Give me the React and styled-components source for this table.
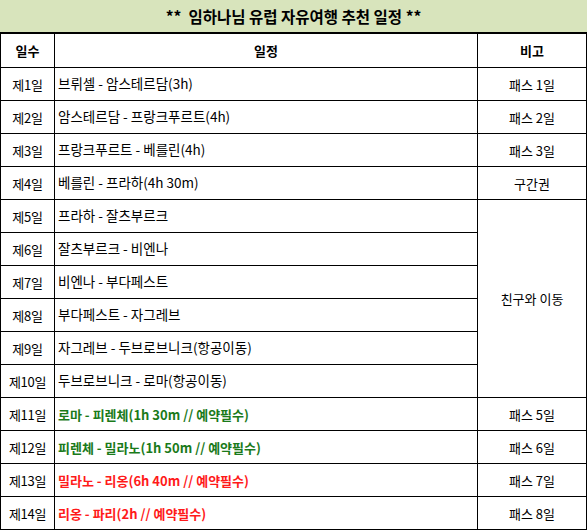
import React from "react";
import styled, { createGlobalStyle } from "styled-components";

const GlobalStyle = createGlobalStyle`
  html, body {
    margin: 0;
    padding: 0;
    background: #ffffff;
  }
  body {
    font-family: "Noto Sans CJK KR", "Noto Sans", sans-serif;
    color: #000;
  }
`;

const Wrapper = styled.div`
  width: 587px;
`;

const Title = styled.div`
  height: 32px;
  background-color: #d8e4bc;
  display: flex;
  justify-content: center;
  align-items: center;
  font-size: 15.5px;
  font-weight: bold;
`;

const Table = styled.table`
  width: 586px;
  border-collapse: collapse;
  table-layout: fixed;
  font-size: 13px;
  border-top: 2px solid #000;
  th,
  td {
    border: 1px solid #000;
    padding: 0;
    line-height: 1;
  }
  th {
    height: 33px;
    font-weight: bold;
    text-align: center;
  }
  td {
    height: 32px;
  }
`;

const Col = styled.col`
  width: ${(props) => props.size}px;
`;

const DayCell = styled.td`
  text-align: center;
  letter-spacing: -0.3px;
`;

const toneColors = {
  green: "#1a7a1a",
  red: "#ff1a1a",
};

const RouteCell = styled.td`
  && {
    padding-left: 3px;
  }
  font-size: ${(props) => (props.tone ? "13px" : "13.5px")};
  color: ${(props) => toneColors[props.tone] || "#000"};
  font-weight: ${(props) => (props.tone ? "bold" : "normal")};
`;

const NoteCell = styled.td`
  text-align: center;
`;

const schedule = [
  { route: "브뤼셀 - 암스테르담(3h)", note: "패스 1일" },
  { route: "암스테르담 - 프랑크푸르트(4h)", note: "패스 2일" },
  { route: "프랑크푸르트 - 베를린(4h)", note: "패스 3일" },
  { route: "베를린 - 프라하(4h 30m)", note: "구간권" },
  { route: "프라하 - 잘츠부르크", note: "친구와 이동", span: 6 },
  { route: "잘츠부르크 - 비엔나" },
  { route: "비엔나 - 부다페스트" },
  { route: "부다페스트 - 자그레브" },
  { route: "자그레브 - 두브로브니크(항공이동)" },
  { route: "두브로브니크 - 로마(항공이동)" },
  { route: "로마 - 피렌체(1h 30m // 예약필수)", note: "패스 5일", tone: "green" },
  { route: "피렌체 - 밀라노(1h 50m // 예약필수)", note: "패스 6일", tone: "green" },
  { route: "밀라노 - 리옹(6h 40m // 예약필수)", note: "패스 7일", tone: "red" },
  { route: "리옹 - 파리(2h // 예약필수)", note: "패스 8일", tone: "red" },
];

const App = () => {
  return (
    <Wrapper>
      <GlobalStyle />
      <Title>**&nbsp;&nbsp;임하나님 유럽 자유여행 추천 일정 **</Title>
      <Table>
        <colgroup>
          <Col size={54} />
          <Col size={423} />
          <Col size={109} />
        </colgroup>
        <thead>
          <tr>
            <th>일수</th>
            <th>일정</th>
            <th>비고</th>
          </tr>
        </thead>
        <tbody>
          {schedule.map((item, index) => (
            <tr key={index}>
              <DayCell>제{index + 1}일</DayCell>
              <RouteCell tone={item.tone}>{item.route}</RouteCell>
              {item.note && <NoteCell rowSpan={item.span || 1}>{item.note}</NoteCell>}
            </tr>
          ))}
        </tbody>
      </Table>
    </Wrapper>
  );
};

export default App;
